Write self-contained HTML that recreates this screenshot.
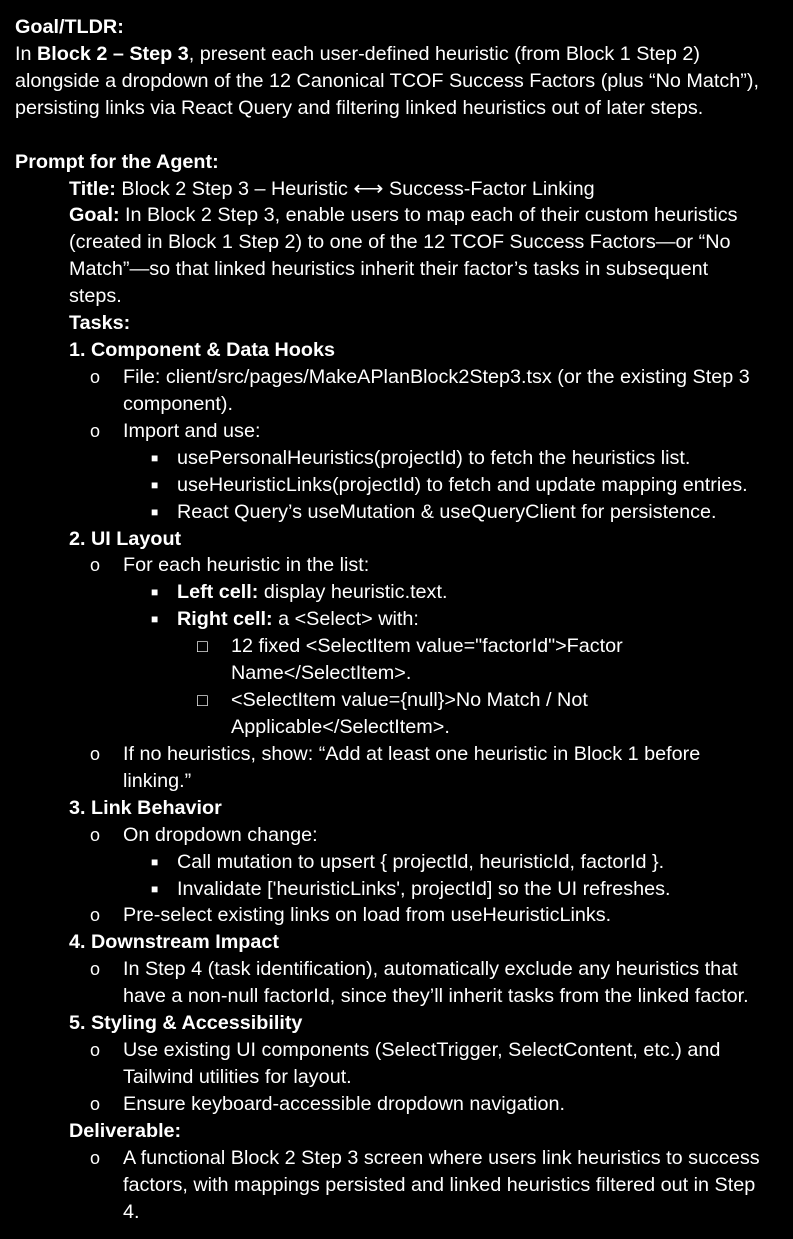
<!DOCTYPE html>
<html><head><meta charset="utf-8"><style>
html,body{margin:0;padding:0;background:#000;}
body{width:793px;height:1239px;overflow:hidden;color:#fff;font-family:"Liberation Sans",sans-serif;font-size:19.8px;}
.w{position:absolute;top:14px;left:0;right:0;}
.l{height:26.93px;line-height:26.93px;white-space:nowrap;position:relative;}
.a{padding-left:15px}.b{padding-left:69px}.c{padding-left:123px}.d{padding-left:177px}.e{padding-left:231px}
.c .m{position:absolute;left:90px;font-size:18px}.d .m{position:absolute;left:151px;font-size:12px}.e .m{position:absolute;left:197px;font-size:18px}
b{font-weight:bold}
.ar{font-size:21px}
</style></head><body><div class="w">
<div class="l a"><b>Goal/TLDR:</b></div>
<div class="l a">In <b>Block 2 – Step 3</b>, present each user-defined heuristic (from Block 1 Step 2)</div>
<div class="l a">alongside a dropdown of the 12 Canonical TCOF Success Factors (plus “No Match”),</div>
<div class="l a">persisting links via React Query and filtering linked heuristics out of later steps.</div>
<div class="l a"></div>
<div class="l a"><b>Prompt for the Agent:</b></div>
<div class="l b"><b>Title:</b> Block 2 Step 3 – Heuristic <span class="ar">⟷</span> Success-Factor Linking</div>
<div class="l b"><b>Goal:</b> In Block 2 Step 3, enable users to map each of their custom heuristics</div>
<div class="l b">(created in Block 1 Step 2) to one of the 12 TCOF Success Factors—or “No</div>
<div class="l b">Match”—so that linked heuristics inherit their factor’s tasks in subsequent</div>
<div class="l b">steps.</div>
<div class="l b"><b>Tasks:</b></div>
<div class="l b"><b>1. Component &amp; Data Hooks</b></div>
<div class="l c"><span class="m">o</span>File: client/src/pages/MakeAPlanBlock2Step3.tsx (or the existing Step 3</div>
<div class="l c">component).</div>
<div class="l c"><span class="m">o</span>Import and use:</div>
<div class="l d"><span class="m">■</span>usePersonalHeuristics(projectId) to fetch the heuristics list.</div>
<div class="l d"><span class="m">■</span>useHeuristicLinks(projectId) to fetch and update mapping entries.</div>
<div class="l d"><span class="m">■</span>React Query’s useMutation &amp; useQueryClient for persistence.</div>
<div class="l b"><b>2. UI Layout</b></div>
<div class="l c"><span class="m">o</span>For each heuristic in the list:</div>
<div class="l d"><span class="m">■</span><b>Left cell:</b> display heuristic.text.</div>
<div class="l d"><span class="m">■</span><b>Right cell:</b> a &lt;Select&gt; with:</div>
<div class="l e"><span class="m">□</span>12 fixed &lt;SelectItem value="factorId"&gt;Factor</div>
<div class="l e">Name&lt;/SelectItem&gt;.</div>
<div class="l e"><span class="m">□</span>&lt;SelectItem value={null}&gt;No Match / Not</div>
<div class="l e">Applicable&lt;/SelectItem&gt;.</div>
<div class="l c"><span class="m">o</span>If no heuristics, show: “Add at least one heuristic in Block 1 before</div>
<div class="l c">linking.”</div>
<div class="l b"><b>3. Link Behavior</b></div>
<div class="l c"><span class="m">o</span>On dropdown change:</div>
<div class="l d"><span class="m">■</span>Call mutation to upsert { projectId, heuristicId, factorId }.</div>
<div class="l d"><span class="m">■</span>Invalidate ['heuristicLinks', projectId] so the UI refreshes.</div>
<div class="l c"><span class="m">o</span>Pre-select existing links on load from useHeuristicLinks.</div>
<div class="l b"><b>4. Downstream Impact</b></div>
<div class="l c"><span class="m">o</span>In Step 4 (task identification), automatically exclude any heuristics that</div>
<div class="l c">have a non-null factorId, since they’ll inherit tasks from the linked factor.</div>
<div class="l b"><b>5. Styling &amp; Accessibility</b></div>
<div class="l c"><span class="m">o</span>Use existing UI components (SelectTrigger, SelectContent, etc.) and</div>
<div class="l c">Tailwind utilities for layout.</div>
<div class="l c"><span class="m">o</span>Ensure keyboard-accessible dropdown navigation.</div>
<div class="l b"><b>Deliverable:</b></div>
<div class="l c"><span class="m">o</span>A functional Block 2 Step 3 screen where users link heuristics to success</div>
<div class="l c">factors, with mappings persisted and linked heuristics filtered out in Step</div>
<div class="l c">4.</div>
</div></body></html>
